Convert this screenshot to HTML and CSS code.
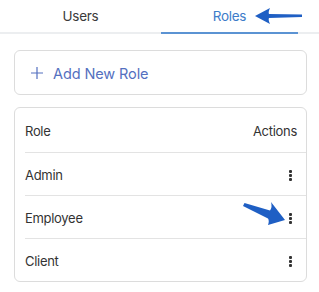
FILE: index.html
```html
<!DOCTYPE html>
<html lang="en">

<head>
    <meta charset="UTF-8" />
    <meta name="viewport" content="width=device-width, initial-scale=1.0" />
    <title>Roles</title>
    <link rel="stylesheet" href="styles.css">
</head>

<body>
    <div class="tabs">
        <div class="tab">Users</div>
        <div class="tab active">Roles</div>
    </div>

    <div class="add-card">
        <svg class="plus" width="14" height="14" viewBox="0 0 14 14">
            <path d="M7 1v12M1 7h12" stroke="#5470c0" stroke-width="1.2" fill="none" />
        </svg>
        <span>Add New Role</span>
    </div>

    <div class="table">
        <div class="row head">
            <span>Role</span>
            <span>Actions</span>
        </div>
        <div class="row">
            <span>Admin</span>
            <span class="kebab"><i></i><i></i><i></i></span>
        </div>
        <div class="row">
            <span>Employee</span>
            <span class="kebab"><i></i><i></i><i></i></span>
        </div>
        <div class="row">
            <span>Client</span>
            <span class="kebab"><i></i><i></i><i></i></span>
        </div>
    </div>

    <!-- annotation arrows -->
    <svg class="arrow arrow-tab" width="50" height="20" viewBox="0 0 50 20">
        <path d="M1 10 L16 2 Q14 6.5 15 8 L48 8.6 L48 11 L15 12 Q14 13.5 16 18 Z" fill="#1f5fc4" />
    </svg>
    <svg class="arrow arrow-row" width="46" height="28" viewBox="0 0 46 28">
        <path d="M44 22 L27 27 Q28.5 23 27 20.5 L2 8 L3.5 5 L29 12.5 Q31.5 9 30 4 Z" fill="#1f5fc4" />
    </svg>
</body>

</html>
```

FILE: styles.css
```css
body {
    margin: 0;
    font-family: Inter, 'Noto Sans', sans-serif;
    font-size: 13px;
    letter-spacing: -0.3px;
    color: #333;
    background: #fff;
    position: relative;
    width: 319px;
    height: 292px;
    overflow: hidden;
}

.tabs {
    display: grid;
    grid-template-columns: 161px 137px;
    border-bottom: 2px solid #eceef0;
    height: 32px;
}

.tab {
    display: flex;
    align-items: center;
    justify-content: center;
    color: #3a3a3a;
    font-size: 13.5px;
}

.tab.active {
    color: #3d7cc9;
    border-bottom: 2px solid #5b93d3;
    margin-bottom: -2px;
}

.add-card {
    margin: 16px 12px 0 14px;
    height: 43px;
    border: 1px solid #dcdcdc;
    border-radius: 6px;
    display: flex;
    align-items: center;
    padding-left: 15px;
    gap: 9px;
    color: #5470c0;
    font-size: 14.5px;
    letter-spacing: -0.1px;
}

.add-card span {
    padding-top: 1px;
}

.table {
    margin: 12px 12px 0 14px;
    border: 1px solid #dcdcdc;
    border-radius: 6px;
}

.row {
    height: 43px;
    display: flex;
    align-items: center;
    justify-content: space-between;
    margin: 0 0 0 10px;
    padding: 2px 9px 0 0;
    box-sizing: border-box;
    border-top: 1px solid #e3e3e3;
}

.row.head {
    border-top: none;
    height: 44px;
}

.kebab {
    display: flex;
    flex-direction: column;
    gap: 1px;
    margin-right: 5px;
}

.kebab i {
    width: 3px;
    height: 3px;
    border-radius: 1px;
    background: #333;
}

.arrow {
    position: absolute;
}

.arrow-tab {
    left: 254px;
    top: 6px;
}

.arrow-row {
    left: 241px;
    top: 198px;
}
```
